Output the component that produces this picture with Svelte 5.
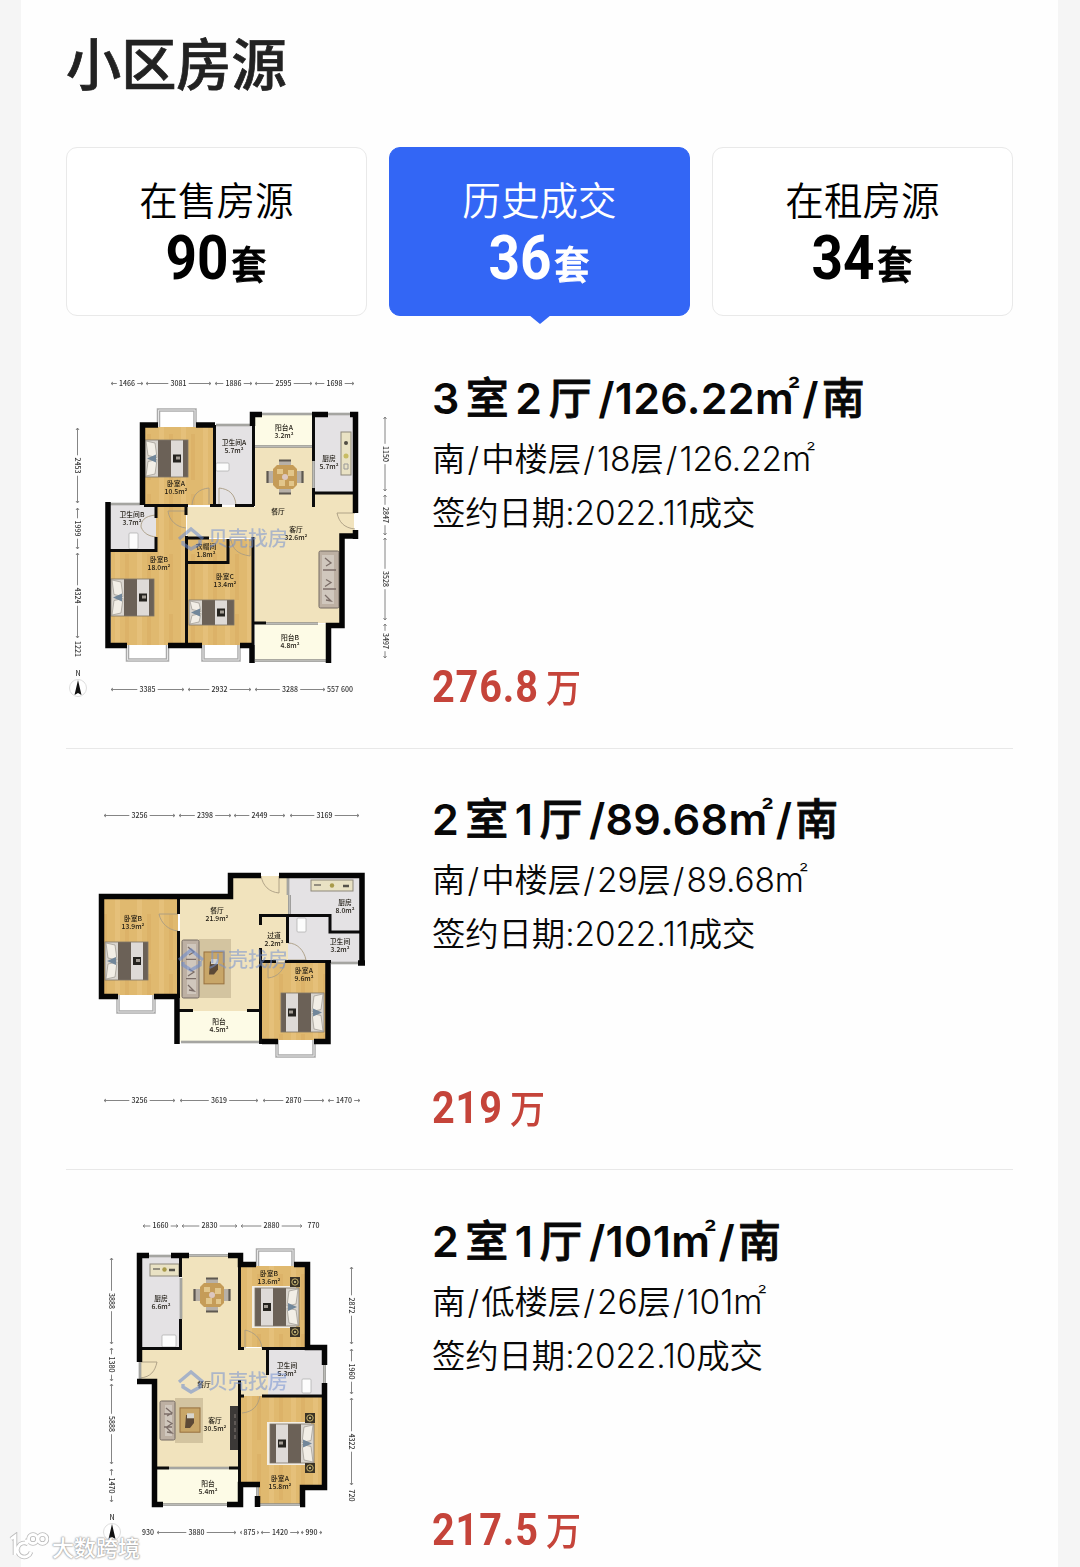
<script lang="ts">
  type Label = [x: number, y: number, name: string, area?: string];
  type Dim = [from: number, to: number, text: string];
  type Bed = { x: number; y: number; w: number; h: number; flip?: boolean; rug?: boolean };
  type Plan = {
    top: number;
    wood: string;
    tile: string;
    floor: string;
    balcony: string;
    thick: string;
    thin: string;
    glass: string;
    bays: string;
    doors: string;
    beds: Bed[];
    tables: [number, number][];
    sofas: { x: number; y: number; w: number; h: number; flip?: boolean }[];
    rugs: { x: number; y: number; w: number; h: number }[];
    stands: [number, number][];
    tv?: [number, number];
    stove: { x: number; y: number; w: number; h: number };
    fixtures: [number, number, number, number][];
    labels: Label[];
    across: { y: number; items: Dim[] }[];
    down: { x: number; items: Dim[] }[];
    compass?: [number, number];
  };

  const tabs = [
    { name: '在售房源', count: 90 },
    { name: '历史成交', count: 36 },
    { name: '在租房源', count: 34 },
  ];
  let active = $state(1);

  // all three plans share one sheet; `top` is where each one's window begins
  const plans: Plan[] = [
    {
      top: 371,
      wood: 'M144 426H214V505H144zM156 505H186V551H156zM111 551H186V645H111zM188 562H252V645H188zM188 539H252V563H188z',
      tile: 'M216 426H253V505H216zM110 505H156V551H110zM314 415H354V493H314z',
      floor: 'M255 446H313V494H354V535H341V623H255V538H187V507H255z',
      balcony: 'M255 415H313V446H255zM255 624H328V660H255z',
      thick:
        'M158 425H142.500V505M196 425H215M252.500 426V414.500H262M312 414.500H328M350 414.500H355.500V513M108 502V645.500H127M168 645.500H202M240 645.500H252M252 645V663M358 536H342V625.500H328.500V663M355.500 530V539',
      thin: 'M214.500 425V505M253.500 417V506M313.500 417V461M313.500 488V507M313 493H357M144 505.500H188M210 505.500H222M235 505.500H254M156 507V518M156 537V550.500M110 550.500H157.500M186 506V515M186.500 536V645M187 538H209M187 562.500H228V539M253 537V645M254 623H266',
      glass: 'M110 504H140M216 425H251M262 414H312M328 414H350M255 660.500H326M266 623.500H318M255 446.500H313M313.500 458V488',
      bays: 'M158.500 427V410H195V427M127.500 645V660H167.500V645M203 645V660H239V645',
      doors: 'M187 511H168C169 520 176 527 186 528M156 515C144 516 141 521 141 527C144 534 149 536 156 537M192 505C193 494 199 489 209 488V504M219 505V488C229 489 235 494 236 505M355 513H337C339 522 344 528 355 529M231 540C233 549 237 554 250 556V540',
      beds: [
        { x: 145, y: 440, w: 43, h: 37 },
        { x: 111, y: 579, w: 43, h: 37 },
        { x: 189, y: 600, w: 45, h: 25 },
      ],
      tables: [[285, 477]],
      sofas: [{ x: 319, y: 551, w: 20, h: 57, flip: true }],
      rugs: [],
      stands: [],
      stove: { x: 341, y: 432, w: 10, h: 43 },
      fixtures: [[216, 463, 13, 8], [129, 533, 9, 16]],
      labels: [
        [176, 486, '卧室A', '10.5m²'], [234, 445, '卫生间A', '5.7m²'], [284, 430, '阳台A', '3.2m²'],
        [329, 461, '厨房', '5.7m²'], [132, 517, '卫生间B', '3.7m²'], [278, 514, '餐厅'],
        [296, 532, '客厅', '32.6m²'], [159, 562, '卧室B', '18.0m²'], [206, 549, '衣帽间', '1.8m²'],
        [225, 579, '卧室C', '13.4m²'], [290, 640, '阳台B', '4.8m²'],
      ],
      across: [
        { y: 383.5, items: [[111, 143, '1466'], [146, 211, '3081'], [215, 252, '1886'], [255, 312, '2595'], [315, 354, '1698']] },
        { y: 689.5, items: [[111, 184, '3385'], [188, 251, '2932'], [255, 325, '3288'], [327, 339, '557'], [340, 354, '600']] },
      ],
      down: [
        { x: 77.5, items: [[428, 503, '2453'], [508, 549, '1999'], [553, 638, '4324'], [641, 657, '1221']] },
        { x: 385, items: [[417, 491, '1150'], [495, 535, '2847'], [538, 620, '3528'], [624, 658, '3497']] },
      ],
      compass: [78, 688],
    },
    {
      top: 792,
      wood: 'M102 897H178V996H102zM262 962H328V1040H262z',
      tile: 'M288 876H361V963H288z',
      floor: 'M180 897H230V876H288V962H260V1011H180z',
      balcony: 'M180 1011H260V1042H180z',
      thick: 'M118 996.500H101.500V896.500H230.500V875.500H261M279 875.500H362V965M154 996.500H177V1044M262 1041.500H278M314 1041.500H328V961M358 963H365',
      thin: 'M178.500 897V914M178.500 931V998M260.500 925V915.500H330V932H360M287.500 915V943M260.500 948V1044M260 961.500H276M285 961.500H331M178 1010.500H193M247 1010.500H261',
      glass: 'M331 963H358M181 1042H260M288 878V895M289.500 895V914',
      bays: 'M118 995V1012H154V995M277 1040V1056H314V1040',
      doors: 'M178 914H159C161 923 168 930 178 931M261 876C263 886 269 892 279 893V876M288 943C297 943 304 950 306 960H288M285 961C284 970 278 977 268 978V962',
      beds: [
        { x: 105, y: 942, w: 43, h: 38 },
        { x: 281, y: 993, w: 43, h: 39, flip: true },
      ],
      tables: [],
      sofas: [{ x: 182, y: 940, w: 17, h: 58 }],
      rugs: [{ x: 199, y: 939, w: 32, h: 59 }],
      stands: [],
      stove: { x: 311, y: 880, w: 42, h: 11 },
      fixtures: [[297, 918, 9, 14]],
      labels: [
        [133, 921, '卧室B', '13.9m²'], [217, 913, '餐厅', '21.9m²'], [274, 938, '过道', '2.2m²'],
        [345, 905, '厨房', '8.0m²'], [340, 944, '卫生间', '3.2m²'], [304, 973, '卧室A', '9.6m²'],
        [219, 1024, '阳台', '4.5m²'],
      ],
      across: [
        { y: 815.5, items: [[104, 175, '3256'], [179, 231, '2398'], [234, 285, '2449'], [290, 359, '3169']] },
        { y: 1100.5, items: [[104, 175, '3256'], [180, 258, '3619'], [263, 324, '2870'], [328, 360, '1470']] },
      ],
      down: [],
    },
    {
      top: 1214,
      wood: 'M241 1265H307V1347H241zM241 1396H323V1485H303V1504H259V1485H241z',
      tile: 'M140 1256H180V1347H140zM268 1348H324V1396H268z',
      floor: 'M182 1256H240V1348H268V1396H240V1468H156V1381H141V1348H182z',
      balcony: 'M156 1468H240V1504H156z',
      thick: 'M149 1255.500H139.500V1362M171 1255.500H189M228 1255.500H240.500V1264.500H256M294 1264.500H307.500V1347.500H324.500V1365M324.500 1383V1487.500H302.500V1504.500H300M137 1381.500H154.500V1504.500H163M227 1504.500H240.500V1484.500H260M257.500 1496V1507',
      thin: 'M180.500 1256V1277M180.500 1319V1348.500H141M239.500 1256V1348.500H244M262 1348.500H326M267.500 1348V1375M267 1396H326M239.500 1380V1505M239 1396H244M262 1396H270M154 1468H169M229 1468H241',
      glass: 'M149 1256H171M189 1255.500H228M163 1504.500H227M260 1504.500H300M324.500 1365V1383M257.500 1487V1496M181 1278V1319M169 1468H229M140 1362V1380',
      bays: 'M257.500 1266V1250H293V1266',
      doors: 'M140 1362H157C155 1371 151 1377 140 1378M245 1348V1330C254 1332 261 1338 262 1348M260 1396C258 1406 253 1412 242 1413',
      beds: [
        { x: 255, y: 1288, w: 44, h: 38, flip: true, rug: true },
        { x: 270, y: 1424, w: 44, h: 39, flip: true, rug: true },
      ],
      tables: [[212, 1295]],
      sofas: [{ x: 160, y: 1401, w: 15, h: 39 }],
      rugs: [{ x: 175, y: 1398, w: 28, h: 45 }],
      stands: [[295, 1282], [295, 1332], [310, 1418], [310, 1468]],
      tv: [230, 1406],
      stove: { x: 150, y: 1264, w: 29, h: 12 },
      fixtures: [[162, 1335, 14, 12], [302, 1379, 9, 14]],
      labels: [
        [161, 1301, '厨房', '6.6m²'], [269, 1276, '卧室B', '13.6m²'], [287, 1368, '卫生间', '5.3m²'],
        [204, 1387, '餐厅'], [215, 1423, '客厅', '30.5m²'], [280, 1481, '卧室A', '15.8m²'],
        [208, 1486, '阳台', '5.4m²'],
      ],
      across: [
        { y: 1226, items: [[143, 178, '1660'], [182, 237, '2830'], [241, 302, '2880'], [305, 322, '770']] },
        { y: 1532.5, items: [[142, 154, '930'], [157, 236, '3880'], [240, 259, '875'], [261, 299, '1420'], [301, 322, '990']] },
      ],
      down: [
        { x: 111.5, items: [[1258, 1344, '3888'], [1348, 1381, '1380'], [1384, 1464, '5888'], [1469, 1502, '1470']] },
        { x: 351.5, items: [[1267, 1344, '2872'], [1349, 1394, '1960'], [1398, 1485, '4322'], [1488, 1503, '720']] },
      ],
      compass: [112, 1532],
    },
  ];

  const deals = [
    { rooms: 3, halls: 2, area: '126.22', facing: '南', floor: '中楼层', floors: 18, date: '2022.11', price: '276.8' },
    { rooms: 2, halls: 1, area: '89.68', facing: '南', floor: '中楼层', floors: 29, date: '2022.11', price: '219' },
    { rooms: 2, halls: 1, area: '101', facing: '南', floor: '低楼层', floors: 26, date: '2022.10', price: '217.5' },
  ];
</script>

{#snippet bed(b: Bed)}
  <g transform="translate({b.flip ? b.x + b.w : b.x} {b.y}) scale({b.flip ? -1 : 1} 1)">
    {#if b.rug}<rect x="3" y="-2" width={b.w} height={b.h + 4} fill="#f3eee4" />{/if}
    <rect width={b.w} height={b.h} fill="#6b6157" />
    <rect width="13" height={b.h} fill="#d9d5cf" />
    <rect x="26" width="12" height={b.h} fill="#dedad7" />
    <path d="M1 1L10 3 12 {b.h / 2 - 1} 3 {b.h / 2 - 3}zM1 {b.h - 1}L10 {b.h - 3} 12 {b.h / 2 + 1} 3 {b.h / 2 + 3}z" fill="#f2eee6" stroke="#9b978e" stroke-width=".7" />
    <path d="M2 {b.h / 2}L11 {b.h / 2 - 4}V{b.h / 2 + 4}z" fill="#72879a" />
    <rect x="28" y={b.h / 2 - 4} width="8" height="8" fill="#25231f" />
    <rect x="31" y={b.h / 2 - 2} width="4" height="3" fill="#a39d95" />
    <rect width={b.w} height={b.h} fill="none" stroke="#7d7468" stroke-width=".8" />
  </g>
{/snippet}

{#snippet dim(from: number, to: number, text: string)}
  {@const mid = (from + to) / 2}
  {@const gap = text.length * 2.3 + 1}
  {#if to - from > 18}
    <path class="dim" d="M{from} 0H{mid - gap}M{mid + gap} 0H{to}M{from + 2} -1.500L{from} 0L{from + 2} 1.500M{to - 2} -1.500L{to} 0L{to - 2} 1.500" />
  {/if}
  <text class="num" x={mid} y="2.300">{text}</text>
{/snippet}

{#snippet floorPlan(p: Plan)}
  <svg class="plan" viewBox="66 {p.top} 333 333" aria-hidden="true">
    <path d={p.floor} fill="#f1e3bd" />
    <path d={p.wood} fill="url(#wood)" />
    <path d={p.tile} fill="#e4e2e4" />
    <path d={p.balcony} fill="#fdfbe6" />
    <path d={p.doors} fill="none" stroke="#a99c82" stroke-width=".9" />
    <path d={p.bays} fill="#fff" stroke="#aaa" stroke-width="3.500" />
    <path d={p.bays} fill="none" stroke="#e5e5e5" stroke-width="1" />
    <path d={p.glass} fill="none" stroke="#8f8f8b" stroke-width="2.600" />
    <path d={p.glass} fill="none" stroke="#c7c7c3" stroke-width=".8" />
    {#each p.rugs as r}
      <rect x={r.x} y={r.y} width={r.w} height={r.h} fill="#d3c4a0" />
      <rect x={r.x + 5} y={r.y + r.h * 0.22} width="20" height={r.h * 0.54} fill="#c8a668" stroke="#97713f" />
      <path d="M{r.x + 11} {r.y + r.h * 0.38}h8v8l-4 5h-5z" fill="#5c4936" />
      <path d="M{r.x + 12} {r.y + r.h * 0.34}h7v5h-7z" fill="#d7d5cd" />
    {/each}
    {#each p.sofas as s}
      <rect x={s.x} y={s.y} width={s.w} height={s.h} rx="1.500" fill="#bdb0a3" stroke="#756b63" />
      <rect x={s.flip ? s.x + 3 : s.x + 5} y={s.y + 4} width={s.w - 8} height={s.h - 8} fill="#d0c7bd" />
      <path d="M{s.x + 4} {s.y + s.h / 3}h{s.w - 7}M{s.x + 4} {s.y + (s.h * 2) / 3}h{s.w - 7}M{s.x + 6} {s.y + 7}l6 5-5 3M{s.x + 7} {s.y + s.h / 2}l5 3-6 4M{s.x + 6} {s.y + s.h - 13}l6 6-5-1" fill="none" stroke="#7c6e68" stroke-width="1.300" />
    {/each}
    {#each p.tables as [x, y]}
      <g transform="translate({x} {y})">
        <path d="M-6 -17H6V-11H-6zM-6 11H6V17H-6zM-18 -6H-11V6H-18zM11 -6H18V6H11z" fill="#b7b0a7" />
        <path d="M-6 -16.500H6M-6 16.500H6M-17.500 -6V6M17.500 -6V6" stroke="#5e5850" stroke-width="2.200" />
        <path d="M-8 -12H8L12 -8V8L8 12H-8L-12 8V-8z" fill="#c59c58" />
        <path d="M-8 -8h6v5h-6zM3 -7h6v6h-6zM-6 3h6v6h-6zM4 4h5v5h-5z" fill="#e2c68b" />
        <circle r="3" fill="#dcc7c0" />
      </g>
    {/each}
    {#each p.beds as b}{@render bed(b)}{/each}
    {#each p.stands as [x, y]}
      <rect x={x - 5} y={y - 5} width="10" height="10" fill="#3a3326" />
      <circle cx={x} cy={y} r="3.200" fill="none" stroke="#c6b26d" />
      <circle cx={x} cy={y} r="1" fill="#e6d896" />
    {/each}
    {#if p.tv}
      <rect x={p.tv[0]} y={p.tv[1]} width="9" height="44" fill="#3c3937" />
      <path d="M{p.tv[0] + 5} {p.tv[1] + 8}v28" stroke="#77706b" stroke-width="1.200" stroke-dasharray="4 3" />
    {/if}
    <rect x={p.stove.x} y={p.stove.y} width={p.stove.w} height={p.stove.h} fill="#e9e2c4" stroke="#8d887b" />
    {#if p.stove.h > p.stove.w}
      <circle cx={p.stove.x + 5} cy={p.stove.y + 11} r="2" fill="#504c43" />
      <circle cx={p.stove.x + 5} cy={p.stove.y + 24} r="2.500" fill="#c8bc63" />
      <path d="M{p.stove.x + 3} {p.stove.y + 32}h4v5h-4z" fill="none" stroke="#999" />
    {:else}
      <path d="M{p.stove.x + 3} {p.stove.y + 5}h7" stroke="#77736a" stroke-width="1.500" />
      <circle cx={p.stove.x + p.stove.w / 2} cy={p.stove.y + 5.5} r="2.200" fill="#a89a4a" />
      <path d="M{p.stove.x + p.stove.w - 10} {p.stove.y + 6}h6" stroke="#55524a" stroke-width="2.500" />
    {/if}
    {#each p.fixtures as [x, y, w, h]}
      <rect {x} {y} width={w} height={h} rx="1" fill="#fcfcfc" stroke="#aaa" stroke-width=".7" />
    {/each}
    <path d={p.thin} fill="none" stroke="#0b0b0b" stroke-width="3" />
    <path d={p.thick} fill="none" stroke="#050505" stroke-width="5.500" />
    {#each p.labels as [x, y, name, area]}
      <text class="room" {x} {y}>{name}</text>
      {#if area}<text class="room" {x} y={y + 7.5}>{area}</text>{/if}
    {/each}
    {#each p.across as line}
      {#each line.items as [a, b, t]}
        <g transform="translate(0 {line.y})">{@render dim(a, b, t)}</g>
      {/each}
    {/each}
    {#each p.down as line}
      {#each line.items as [a, b, t]}
        <g transform="translate({line.x} 0) rotate(90)">{@render dim(a, b, t)}</g>
      {/each}
    {/each}
    {#if p.compass}
      <g transform="translate({p.compass[0]} {p.compass[1]})">
        <circle r="8.500" fill="#fff" stroke="#ddd" />
        <path d="M0 -8L3.500 7 0 5-3.500 7z" fill="#111" />
        <text class="num" y="-12">N</text>
      </g>
    {/if}
    <g class="brand" transform="translate(0 {p.top + 167})">
      <path d="M179 1L191 -9L203 1M183 3V6L191 11L200 6V2" />
      <text x="208" y="7.500">贝壳找房</text>
    </g>
  </svg>
{/snippet}

<svg class="defs" width="0" height="0" aria-hidden="true">
  <defs>
    <pattern id="wood" width="22" height="60" patternUnits="userSpaceOnUse">
      <rect width="22" height="60" fill="#e0b96f" />
      <rect x="5" width="5" height="60" fill="#e5c07a" />
      <rect x="15" y="14" width="4" height="46" fill="#dcb268" />
    </pattern>
  </defs>
</svg>

<div class="screen">
  <main class="page">
    <h1>小区房源</h1>

    <div class="tabs" role="tablist">
      {#each tabs as tab, i}
        <button class="tab" class:active={active === i} role="tab" aria-selected={active === i} onclick={() => (active = i)}>
          <span class="name">{tab.name}</span>
          <span class="count"><b>{tab.count}</b><i>套</i></span>
        </button>
      {/each}
    </div>

    <ul class="deals">
      {#each deals as deal, i}
        <li class="deal">
          {@render floorPlan(plans[i])}
          <div class="info">
            <h2>{deal.rooms}<span>室</span>{deal.halls}<span>厅</span>/{deal.area}<em>m<sup>²</sup></em>/<span class="facing">{deal.facing}</span></h2>
            <p>{deal.facing}<s>/</s>{deal.floor}<s>/</s>{deal.floors}层<s>/</s>{deal.area}<em>m<sup>²</sup></em></p>
            <p>签约日期:{deal.date}成交</p>
            <div class="price"><b>{deal.price}</b>万</div>
          </div>
        </li>
      {/each}
    </ul>
  </main>

  <div class="stamp">
    <svg viewBox="0 0 40 28" width="40" height="28" aria-hidden="true">
      <g class="halo"><path d="M2 7L6 4V23M19 12A7 7 0 1 0 22 20M16 9H20" /><circle cx="24" cy="7" r="4.500" /><circle cx="33.500" cy="7" r="4.500" /></g>
      <g class="line"><path d="M2 7L6 4V23M19 12A7 7 0 1 0 22 20M16 9H20" /><circle cx="24" cy="7" r="4.500" /><circle cx="33.500" cy="7" r="4.500" /></g>
    </svg>
    <span>大数跨境</span>
  </div>
</div>

<style>
  :global(body) {
    background: #f5f5f5;
  }

  .defs {
    position: absolute;
  }

  .screen {
    position: relative;
    height: 1567px;
    overflow: hidden;
  }
  .page {
    margin: 0 22px 0 21px;
    padding: 0 45px;
    background: #fefefe;
    color: #080808;
    font-family: Inter, 'Noto Sans CJK SC', sans-serif;
  }

  h1 {
    margin: 0;
    height: 147px;
    color: #222;
    font-size: 55.2px;
    font-weight: 500;
    line-height: 131px;
    -webkit-text-stroke: 0.7px currentColor;
  }

  .tabs {
    display: grid;
    grid-template-columns: repeat(3, 1fr);
    gap: 22px;
    height: 169px;
  }

  .tab {
    position: relative;
    display: flex;
    flex-direction: column;
    align-items: center;
    padding: 31px 0 0;
    border: 1.5px solid #e9e9e9;
    border-radius: 11px;
    background: #fff;
    color: #000;
    font-family: inherit;
  }
  .name {
    font-size: 38.6px;
    font-weight: 350;
    line-height: 44px;
  }
  /* narrow numerals */
  .count {
    display: flex;
    align-items: baseline;
    height: 70px;
    line-height: 70px;
    transform: scaleX(0.9);
  }
  .count b {
    font: 700 61px/70px Roboto, sans-serif;
  }
  .count i {
    margin-left: 3px;
    font-size: 39px;
    font-style: normal;
    font-weight: 500;
    -webkit-text-stroke: 1px currentColor;
  }
  .tab.active {
    border-color: #3366f5;
    background: #3366f5;
    color: #fff;
  }
  /* pointer under the selected tab */
  .tab.active::after {
    content: '';
    position: absolute;
    top: 100%;
    left: 50%;
    transform: translateX(-50%);
    border: 11px solid transparent;
    border-top: 9px solid #3366f5;
    border-bottom: 0;
  }

  .deals {
    margin: 11px 0 0;
    padding: 0;
    list-style: none;
  }
  .deal {
    display: flex;
    align-items: center;
    gap: 33px;
    box-sizing: border-box;
    height: 421.5px;
    border-bottom: 1.5px solid #e8e8e8;
  }
  .deal:last-child {
    border-bottom: 0;
  }

  .plan {
    flex: none;
    width: 333px;
    height: 333px;
    filter: blur(0.7px);
  }
  .plan text {
    font-family: 'Noto Sans CJK SC', sans-serif;
  }
  .room {
    fill: #1e1a12;
    font-size: 6.8px;
    font-weight: 500;
    text-anchor: middle;
  }
  .num {
    fill: #333;
    font-size: 7px;
    font-weight: 500;
    text-anchor: middle;
  }
  .dim {
    fill: none;
    stroke: #777;
    stroke-width: 0.9;
  }
  .brand {
    opacity: 0.55;
  }
  .brand path {
    fill: none;
    stroke: #6a8bd0;
    stroke-width: 3.4;
  }
  .brand text {
    fill: #7693d2;
    font-size: 20px;
    font-weight: 500;
  }

  .info {
    display: flex;
    flex-direction: column;
    align-items: flex-start;
    height: 333px;
    white-space: nowrap;
  }
  h2 {
    margin: 0 0 7px;
    font-size: 43px;
    font-weight: 600;
    line-height: 54px;
    letter-spacing: 0.3px;
  }
  h2 span {
    margin: 0 6.2px;
    font-weight: 500;
    -webkit-text-stroke: 0.8px currentColor;
  }
  h2 .facing {
    margin: 0 0 0 3px;
  }
  p {
    margin: 0;
    font-size: 33.4px;
    font-weight: 350;
    line-height: 54px;
    letter-spacing: -0.1px;
  }
  s {
    margin: 0 2.2px;
    text-decoration: none;
  }
  em {
    font-style: normal;
  }
  sup {
    position: relative;
    top: -0.5em;
    margin: 0 0.05em 0 -0.22em;
    font-size: 0.65em;
    line-height: 0;
    vertical-align: baseline;
  }
  .price {
    margin: auto 0 -2px;
    color: #c5443a;
    font-size: 39px;
    font-weight: 500;
    line-height: 36px;
    transform: scaleX(0.9);
    transform-origin: left;
  }
  .price b {
    margin-right: 8px;
    font: 700 44px/36px Roboto, sans-serif;
    letter-spacing: 1px;
  }

  .stamp {
    position: absolute;
    left: 9px;
    bottom: 6px;
    display: flex;
    align-items: center;
    gap: 3px;
    color: #fff;
    font: 500 22px/30px 'Noto Sans CJK SC', sans-serif;
    text-shadow: 0 0 2px #999, 0 0 2px #aaa, 0 0 1px #aaa;
  }
  .stamp path,
  .stamp circle {
    fill: none;
  }
  .halo {
    stroke: #bbb;
    stroke-width: 4.5;
  }
  .line {
    stroke: #fff;
    stroke-width: 2.8;
  }
</style>
